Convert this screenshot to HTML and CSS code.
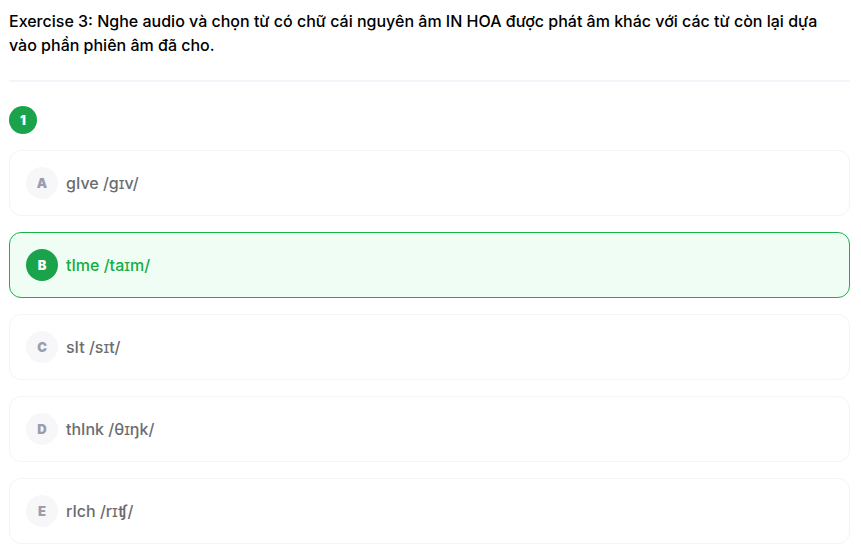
FILE: index.html
```html
<!DOCTYPE html>
<html lang="vi">
<head>
<meta charset="utf-8">
<meta name="viewport" content="width=device-width, initial-scale=1">
<title>Exercise 3</title>
<link rel="stylesheet" href="styles.css">
</head>
<body>
<main class="exercise">
  <header class="header">
    <h1 class="title">Exercise 3: Nghe audio và chọn từ có chữ cái nguyên âm IN HOA được phát âm khác với các từ còn lại dựa vào phần phiên âm đã cho.</h1>
  </header>
  <section class="question">
    <div class="number">1</div>
    <div class="options">
      <button type="button" class="option"><span class="letter">A</span><span>gIve /gɪv/</span></button>
      <button type="button" class="option selected" aria-pressed="true"><span class="letter">B</span><span>tIme /taɪm/</span></button>
      <button type="button" class="option"><span class="letter">C</span><span>sIt /sɪt/</span></button>
      <button type="button" class="option"><span class="letter">D</span><span>thInk /θɪŋk/</span></button>
      <button type="button" class="option"><span class="letter">E</span><span>rIch /rɪʧ/</span></button>
    </div>
  </section>
</main>
</body>
</html>
```
FILE: styles.css
```css
* { box-sizing: border-box; }
body {
  margin: 0;
  background: #fff;
  color: #000;
  font: 16px/24px Inter, sans-serif;
}
.exercise { padding: 9px 11px 8px 9px; }
.header {
  padding-bottom: 23px;
  border-bottom: 2px solid #f4f4fa;
}
.title {
  margin: 0;
  padding-right: 16px;
  font-size: 16px;
  line-height: 24px;
  font-weight: 500;
}
.question { padding-top: 24px; }
.number {
  display: flex;
  align-items: center;
  justify-content: center;
  width: 28px;
  height: 28px;
  border-radius: 50%;
  background: #1aa34a;
  color: #fff;
  font-size: 13px;
  font-weight: 900;
}
.options {
  display: grid;
  gap: 16px;
  margin-top: 16px;
}
.option {
  display: flex;
  align-items: center;
  gap: 8px;
  padding: 16px;
  border: 1px solid #f4f4f7;
  border-radius: 12px;
  background: #fff;
  color: #6c6c70;
  font: 500 16px/24px Inter, sans-serif;
  text-align: left;
  cursor: pointer;
}
.letter {
  display: flex;
  align-items: center;
  justify-content: center;
  width: 32px;
  height: 32px;
  border-radius: 50%;
  background: #f7f7fa;
  color: #9a9dab;
  font-size: 13px;
  font-weight: 900;
}
.selected {
  border-color: #16b24a;
  background: #f0fdf4;
  color: #14ad42;
}
.selected .letter { background: #1aa34a; color: #fff; }
```
